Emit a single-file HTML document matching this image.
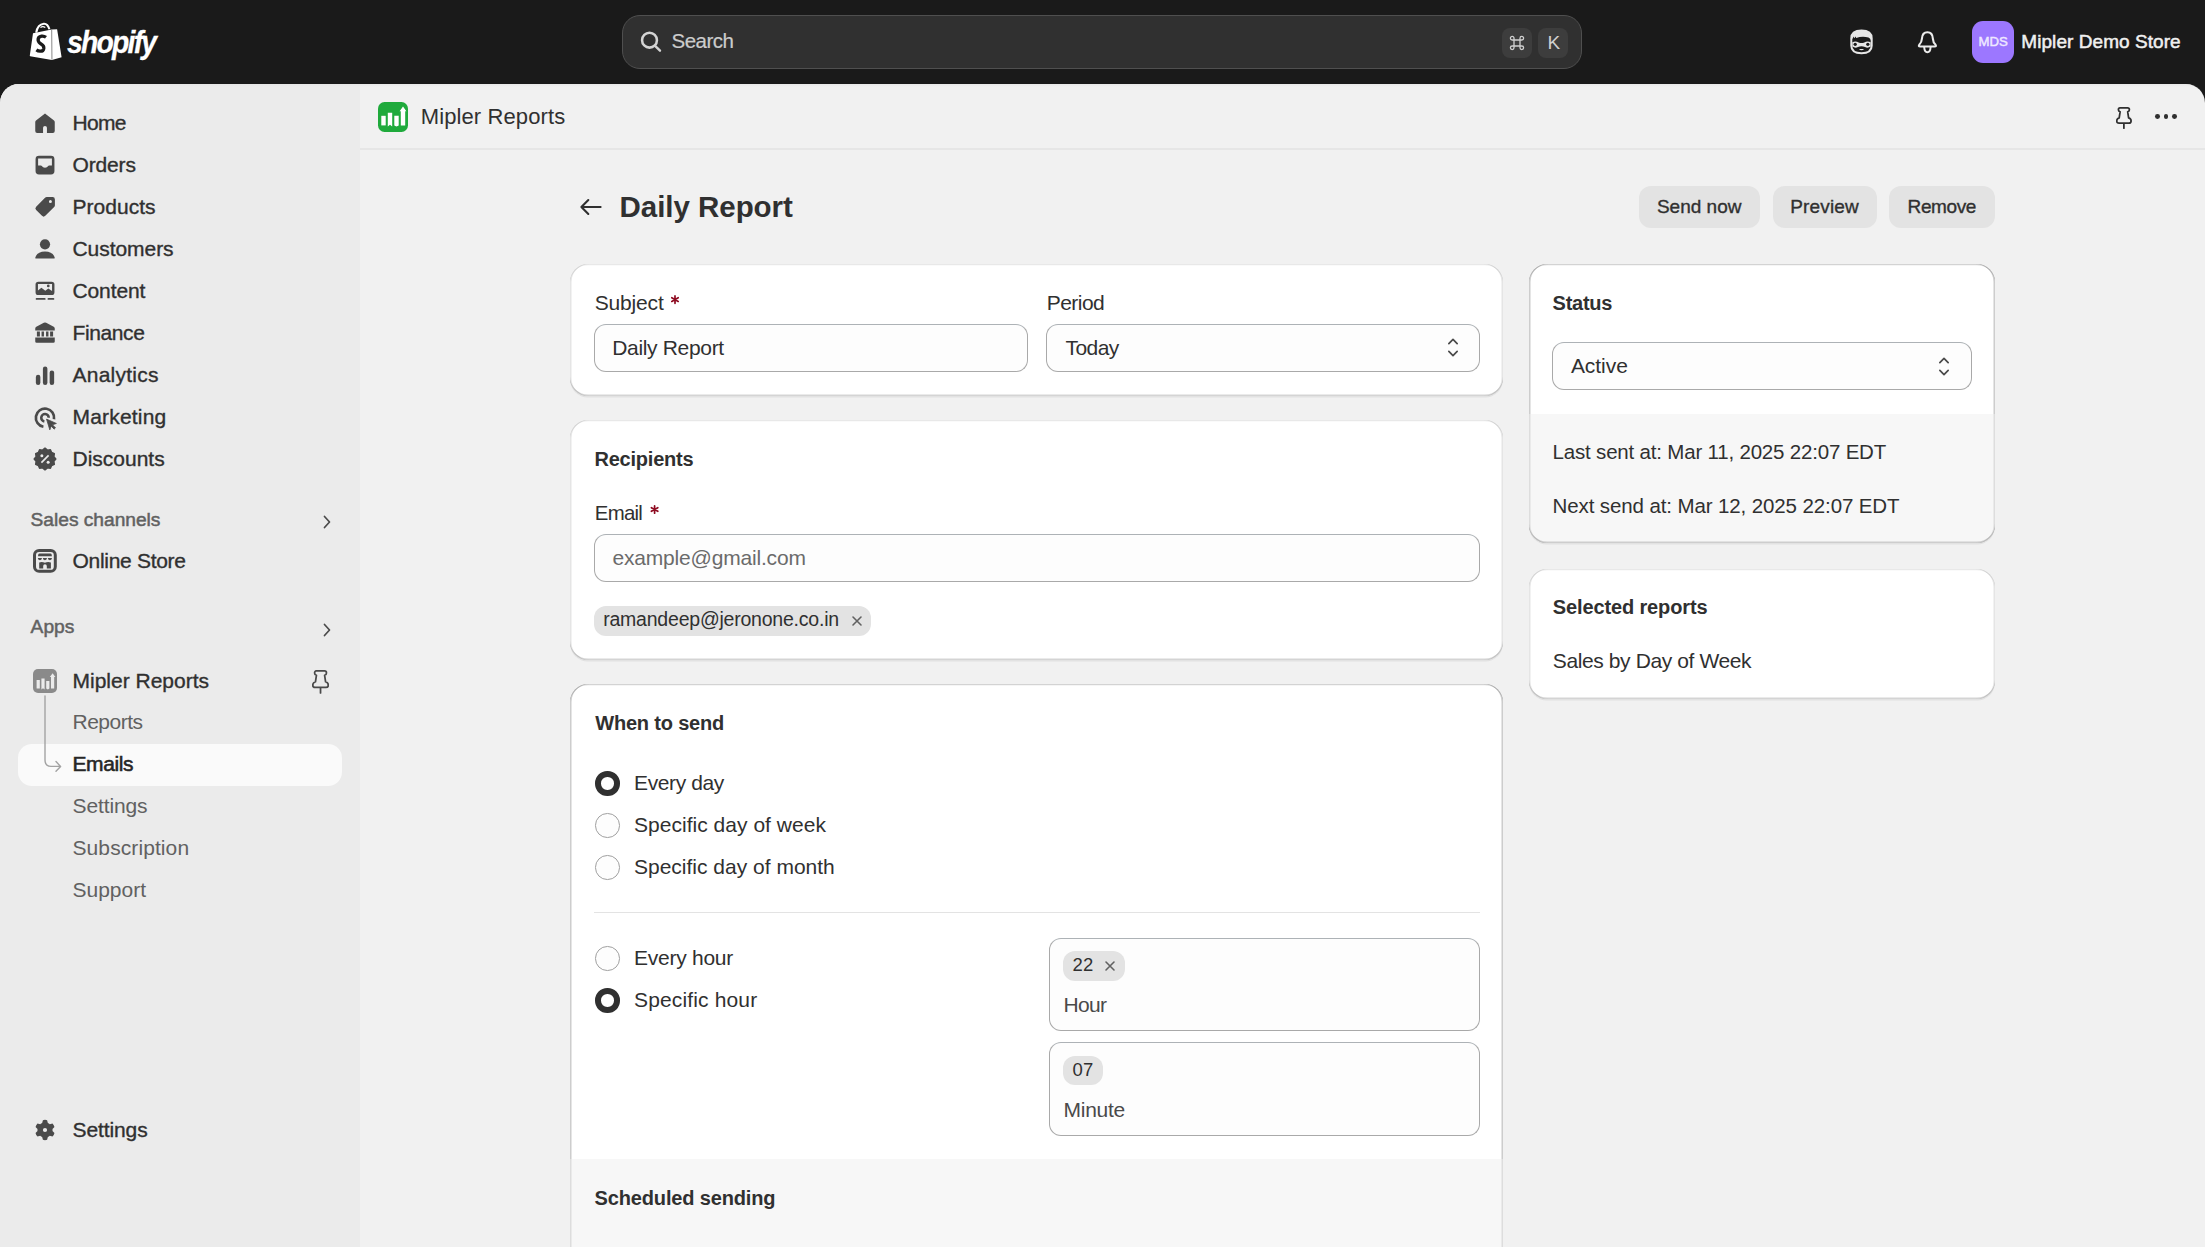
<!DOCTYPE html>
<html><head><meta charset="utf-8">
<style>
*{box-sizing:border-box;margin:0;padding:0}
html,body{width:2205px;height:1247px;overflow:hidden;background:#1a1a1a;font-family:"Liberation Sans",sans-serif;color:#303030;position:relative}
.abs{position:absolute}
.t{position:absolute;white-space:nowrap;line-height:1}
#frame{position:absolute;left:0;top:84px;width:2205px;height:1163px;border-radius:19px 19px 0 0;overflow:hidden;background:#f1f1f1}
#in{position:absolute;left:0;top:-84px;width:2205px;height:1247px}
.card{position:absolute;background:#fff;border-radius:18px;overflow:hidden;box-shadow:0 1.5px 0 0 rgba(26,26,26,.07),inset 0 1.2px 0 0 rgba(0,0,0,.09),inset 0 -1.5px 0 0 rgba(0,0,0,.17),inset 1.5px 0 0 0 rgba(0,0,0,.10),inset -1.5px 0 0 0 rgba(0,0,0,.10)}
.cardb{position:absolute;border-radius:18px;pointer-events:none;box-shadow:inset 0 1.2px 0 0 rgba(0,0,0,.09),inset 0 -1.5px 0 0 rgba(0,0,0,.17),inset 1.5px 0 0 0 rgba(0,0,0,.10),inset -1.5px 0 0 0 rgba(0,0,0,.10)}
.inp{position:absolute;border:1.6px solid #a9a9a9;border-top-color:#adb2b6;border-radius:12px;background:#fdfdfd}
</style></head><body>
<svg class="abs" style="left:0px;top:0px;" width="80" height="70" viewBox="0 0 80 70"><path d="M33 33.2 L51.6 29.4 L57.1 29.2 L61.6 57.3 L51.9 59.9 L30.2 56.2 Q29.7 56.1 29.8 55.5Z" fill="#fff"/>
  <path d="M51.7 29.6 L51.95 59.6" stroke="#7a7a7a" stroke-width="0.9"/>
  <path d="M36.2 32.6 Q37.6 24.6 43.8 23.8 Q47.6 23.5 49.4 29.2" fill="none" stroke="#fff" stroke-width="2.1"/>
  <path d="M40.5 27.6 Q42.6 25.6 45.3 27.5" fill="none" stroke="#fff" stroke-width="1.3"/>
  <path d="M46 37.3 Q44 35.8 41.6 36.1 Q37.9 36.7 38.1 40.1 Q38.4 42.6 41.4 44.2 Q44.1 45.7 43.8 48.4 Q43.3 51.4 40.1 51.2 Q38.1 51 36.4 49.8" fill="none" stroke="#1a1a1a" stroke-width="3.3"/></svg>
<div class="t" style="font-size:32px;left:66.50px;top:25.80px;color:#fff;font-weight:bold;font-style:italic;letter-spacing:-2px;transform:scaleX(0.885);transform-origin:0 0;-webkit-text-stroke:0.3px #fff;">shopify</div>
<div class="abs" style="left:622px;top:15px;width:960px;height:54px;border-radius:18px;background:#303030;border:1.5px solid #4f4f4f;"></div>
<svg class="abs" style="left:636px;top:27px;" width="30" height="30" viewBox="0 0 20 20"><circle cx="9" cy="8.8" r="4.95" fill="none" stroke="#d4d4d4" stroke-width="1.7"/><path d="M12.9 12.7 L16 15.8" stroke="#d4d4d4" stroke-width="1.6" stroke-linecap="round"/></svg>
<div class="t" style="font-size:20.5px;left:671.50px;top:31.35px;color:#cccccc;letter-spacing:-0.500px;-webkit-text-stroke:0.2px #cccccc;">Search</div>
<div class="abs" style="left:1501.5px;top:27.7px;width:30px;height:30px;border-radius:8px;background:#3d3d3d;"></div>
<div class="abs" style="left:1537.5px;top:27.7px;width:30px;height:30px;border-radius:8px;background:#3d3d3d;"></div>
<svg class="abs" style="left:1508.5px;top:34.5px;" width="16" height="16" viewBox="0 0 16 16"><path d="M5 5 H11 V11 H5Z M5 5 V3.2 A1.8 1.8 0 1 0 3.2 5 H5 M11 5 H12.8 A1.8 1.8 0 1 0 11 3.2 V5 M11 11 V12.8 A1.8 1.8 0 1 0 12.8 11 H11 M5 11 H3.2 A1.8 1.8 0 1 0 5 12.8 V11" fill="none" stroke="#d0d0d0" stroke-width="1.3"/></svg>
<div class="t" style="font-size:19px;left:1547.40px;top:32.70px;color:#d0d0d0;">K</div>
<svg class="abs" style="left:0px;top:0px;" width="2205" height="84" viewBox="0 0 2205 84"><path d="M1850.3 38.5 Q1850.3 29.6 1861.5 29.6 Q1872.7 29.6 1872.7 38.5 V45.5 Q1872.7 54.2 1861.5 54.2 Q1850.3 54.2 1850.3 45.5Z" fill="#e6e6e6"/>
<path d="M1852.3 39.2 L1853.6 36.6 L1854.3 38.3 L1855.6 36.4 L1856.2 38 Q1862 35.6 1868.5 37.4 Q1870.7 38.2 1870.7 40.5 V45.5 Q1870.7 52.2 1861.5 52.2 Q1852.3 52.2 1852.3 45.5Z" fill="#1a1a1a"/>
<path d="M1852.3 42.2 Q1855.8 40.9 1858.6 42.5 Q1861.5 43.7 1864.4 42.5 Q1867.2 40.9 1870.7 42.2 V46.6 Q1867.8 48.6 1865 47.1 Q1861.5 45.4 1858 47.1 Q1855.2 48.6 1852.3 46.6Z" fill="#e6e6e6"/>
<circle cx="1855.2" cy="44.3" r="1.65" fill="#1a1a1a"/><circle cx="1867.8" cy="44.3" r="1.65" fill="#1a1a1a"/>
<path d="M1858.9 48.9 Q1861.5 51.6 1864.1 48.9Z" fill="#e6e6e6"/>
<path d="M1927.4 32.3 C1923.6 32.3 1922.1 35.3 1921.9 38.8 Q1921.6 42.6 1919.4 44.5 Q1918 46.5 1920.2 46.5 H1934.6 Q1936.8 46.5 1935.4 44.5 Q1933.2 42.6 1932.9 38.8 C1932.7 35.3 1931.2 32.3 1927.4 32.3Z" fill="none" stroke="#ececec" stroke-width="2.1" stroke-linejoin="round"/>
<path d="M1924.2 47 Q1924.5 52.3 1927.4 52.3 Q1930.3 52.3 1930.6 47" fill="none" stroke="#ececec" stroke-width="2"/></svg>
<div class="abs" style="left:1972.3px;top:20.8px;width:42.2px;height:42.2px;border-radius:11px;background:#9c77ff;"></div>
<div class="t" style="font-size:13.2px;left:1978.40px;top:35.10px;color:#efe8ff;-webkit-text-stroke:0.45px #efe8ff;">MDS</div>
<div class="t" style="font-size:19px;left:2021.30px;top:31.90px;color:#f0f0f0;letter-spacing:0.062px;-webkit-text-stroke:0.5px #f0f0f0;">Mipler Demo Store</div>
<div id="frame"><div id="in">
<div class="abs" style="left:0px;top:84px;width:360px;height:1163px;background:#ebebeb;"></div>
<div class="abs" style="left:0px;top:84px;width:2205px;height:3px;background:linear-gradient(#e2e2e2,rgba(255,255,255,0));opacity:.6;"></div>
<svg class="abs" style="left:30px;top:108px;" width="30" height="30" viewBox="0 0 20 20"><g fill="#4a4a4a"><path d="M10 3.6 L16 8.3 Q16.5 8.7 16.5 9.4 V15.3 Q16.5 16.6 15.2 16.6 H11.3 V13.2 Q11.3 12 10 12 Q8.7 12 8.7 13.2 V16.6 H4.8 Q3.5 16.6 3.5 15.3 V9.4 Q3.5 8.7 4 8.3 Z"/></g></svg>
<div class="t" style="font-size:21px;left:72.50px;top:112.00px;color:#303030;letter-spacing:-0.667px;-webkit-text-stroke:0.35px #303030;">Home</div>
<svg class="abs" style="left:30px;top:150px;" width="30" height="30" viewBox="0 0 20 20"><g fill="#4a4a4a"><path fill-rule="evenodd" d="M6 3.8 H14 Q16.3 3.8 16.3 6.1 V14 Q16.3 16.3 14 16.3 H6 Q3.7 16.3 3.7 14 V6.1 Q3.7 3.8 6 3.8Z M5.4 5.7 V10.3 H7.3 Q7.7 10.3 7.9 10.7 Q8.5 11.9 10 11.9 Q11.5 11.9 12.1 10.7 Q12.3 10.3 12.7 10.3 H14.6 V5.7Z"/></g></svg>
<div class="t" style="font-size:21px;left:72.50px;top:154.00px;color:#303030;letter-spacing:-0.160px;-webkit-text-stroke:0.35px #303030;">Orders</div>
<svg class="abs" style="left:30px;top:192px;" width="30" height="30" viewBox="0 0 20 20"><g fill="#4a4a4a"><path fill-rule="evenodd" d="M11.2 3.4 H15 Q16.6 3.4 16.6 5 V8.8 Q16.6 9.5 16.1 10 L10.2 15.9 Q9.1 17 8 15.9 L4.1 12 Q3 10.9 4.1 9.8 L10 3.9 Q10.5 3.4 11.2 3.4Z M13.6 5.4 A1 1 0 1 0 13.6 7.4 A1 1 0 1 0 13.6 5.4Z"/></g></svg>
<div class="t" style="font-size:21px;left:72.50px;top:196.00px;color:#303030;letter-spacing:0.029px;-webkit-text-stroke:0.35px #303030;">Products</div>
<svg class="abs" style="left:30px;top:234px;" width="30" height="30" viewBox="0 0 20 20"><g fill="#4a4a4a"><circle cx="10" cy="6.9" r="3.4"/><path d="M3.8 16.4 Q3.4 16.4 3.5 15.9 Q4.6 11.6 10 11.6 Q15.4 11.6 16.5 15.9 Q16.6 16.4 16.2 16.4Z"/></g></svg>
<div class="t" style="font-size:21px;left:72.50px;top:238.00px;color:#303030;letter-spacing:-0.050px;-webkit-text-stroke:0.35px #303030;">Customers</div>
<svg class="abs" style="left:30px;top:276px;" width="30" height="30" viewBox="0 0 20 20"><g fill="#4a4a4a"><path fill-rule="evenodd" d="M5.6 3.8 H14.4 Q16.3 3.8 16.3 5.7 V10.8 Q16.3 12.7 14.4 12.7 H5.6 Q3.7 12.7 3.7 10.8 V5.7 Q3.7 3.8 5.6 3.8Z M5.3 5.4 V9.6 L7.6 7.8 L10.2 9.8 L12.2 8.4 L14.7 10 V5.4Z"/><circle cx="12.2" cy="6.6" r="0.9"/><rect x="3.8" y="14.6" width="6.6" height="1.3" rx=".6"/><rect x="11.7" y="14.6" width="4.5" height="1.3" rx=".6"/></g></svg>
<div class="t" style="font-size:21px;left:72.50px;top:280.00px;color:#303030;letter-spacing:-0.117px;-webkit-text-stroke:0.35px #303030;">Content</div>
<svg class="abs" style="left:30px;top:318px;" width="30" height="30" viewBox="0 0 20 20"><g fill="#4a4a4a"><path fill-rule="evenodd" d="M9.2 3.2 Q10 2.8 10.8 3.2 L15.8 5.9 Q16.5 6.3 16.5 7 V8.3 H3.5 V7 Q3.5 6.3 4.2 5.9Z M3.5 13 H16.5 V15.6 Q16.5 16.5 15.6 16.5 H4.4 Q3.5 16.5 3.5 15.6Z M4.6 9 H6.6 V12.4 H4.6Z M7.7 9 H9.3 V12.4 H7.7Z M10.7 9 H12.3 V12.4 H10.7Z M13.4 9 H15.4 V12.4 H13.4Z"/></g></svg>
<div class="t" style="font-size:21px;left:72.50px;top:322.00px;color:#303030;letter-spacing:-0.383px;-webkit-text-stroke:0.35px #303030;">Finance</div>
<svg class="abs" style="left:30px;top:360px;" width="30" height="30" viewBox="0 0 20 20"><g fill="#4a4a4a"><rect x="3.9" y="9.9" width="3" height="6.7" rx="1.5"/><rect x="8.6" y="4.4" width="3" height="12.2" rx="1.5"/><rect x="13.1" y="7" width="3" height="9.6" rx="1.5"/></g></svg>
<div class="t" style="font-size:21px;left:72.50px;top:364.00px;color:#303030;letter-spacing:0.250px;-webkit-text-stroke:0.35px #303030;">Analytics</div>
<svg class="abs" style="left:30px;top:402px;" width="30" height="30" viewBox="0 0 20 20"><g fill="#4a4a4a"><path d="M8.94 16.51 A6.1 6.1 0 1 1 16.01 11.56" fill="none" stroke="#4a4a4a" stroke-width="1.8"/><path d="M9.57 12.96 A2.5 2.5 0 1 1 12.5 10.5" fill="none" stroke="#4a4a4a" stroke-width="1.7"/><path d="M11 11.4 L17.6 14.3 L15 15.2 L17 17.2 L16.1 18.1 L14.1 16.1 L13.2 18.6 Z" stroke="#4a4a4a" stroke-width=".5" stroke-linejoin="round"/></g></svg>
<div class="t" style="font-size:21px;left:72.50px;top:406.00px;color:#303030;letter-spacing:0.188px;-webkit-text-stroke:0.35px #303030;">Marketing</div>
<svg class="abs" style="left:30px;top:444px;" width="30" height="30" viewBox="0 0 20 20"><g fill="#4a4a4a"><path d="M10 2.8 L11.6 4.1 L13.6 3.8 L14.4 5.7 L16.2 6.5 L15.9 8.4 L17.2 10 L15.9 11.6 L16.2 13.5 L14.4 14.3 L13.6 16.2 L11.6 15.9 L10 17.2 L8.4 15.9 L6.4 16.2 L5.6 14.3 L3.8 13.5 L4.1 11.6 L2.8 10 L4.1 8.4 L3.8 6.5 L5.6 5.7 L6.4 3.8 L8.4 4.1Z" stroke="#4a4a4a" stroke-width="1" stroke-linejoin="round"/><circle cx="7.9" cy="7.9" r="1" fill="#ebebeb"/><circle cx="12.1" cy="12.1" r="1" fill="#ebebeb"/><path d="M7.2 12 L12 7.2 L12.8 8 L8 12.8Z" fill="#ebebeb"/></g></svg>
<div class="t" style="font-size:21px;left:72.50px;top:448.00px;color:#303030;-webkit-text-stroke:0.35px #303030;">Discounts</div>
<div class="t" style="font-size:19.2px;left:30.60px;top:509.60px;color:#616161;letter-spacing:-0.023px;-webkit-text-stroke:0.5px #616161;">Sales channels</div>
<svg class="abs" style="left:317px;top:512px;" width="20" height="20" viewBox="0 0 20 20"><path d="M7.5 4.5 L12.5 10 L7.5 15.5" fill="none" stroke="#4a4a4a" stroke-width="1.7" stroke-linecap="round" stroke-linejoin="round"/></svg>
<svg class="abs" style="left:0px;top:0px;" width="80" height="600" viewBox="0 0 80 600"><rect x="34.5" y="550.4" width="20.8" height="20.9" rx="4.6" fill="none" stroke="#4a4a4a" stroke-width="3"/><path d="M39.6 553.5 H50.3 Q51.3 553.5 51.6 554.6 L51.9 556.3 H38 L38.3 554.6 Q38.6 553.5 39.6 553.5Z" fill="#4a4a4a"/><path d="M37.8 558.1 A2.1 2.1 0 0 0 42 558.1Z M42.8 558.1 A2.1 2.1 0 0 0 47 558.1Z M47.8 558.1 A2.1 2.1 0 0 0 52 558.1Z" fill="#4a4a4a"/><path d="M39.2 562.4 Q42 561.2 44.9 562.8 Q47.8 561.2 50.9 562.4 V568.4 H46.8 V565.9 Q46.8 564.2 44.95 564.2 Q43.2 564.2 43.2 565.9 V568.4 H39.2Z" fill="#4a4a4a"/></svg>
<div class="t" style="font-size:21px;left:72.50px;top:549.80px;color:#303030;letter-spacing:-0.300px;-webkit-text-stroke:0.35px #303030;">Online Store</div>
<div class="t" style="font-size:19.2px;left:30.60px;top:617.00px;color:#616161;-webkit-text-stroke:0.5px #616161;">Apps</div>
<svg class="abs" style="left:317px;top:620px;" width="20" height="20" viewBox="0 0 20 20"><path d="M7.5 4.5 L12.5 10 L7.5 15.5" fill="none" stroke="#4a4a4a" stroke-width="1.7" stroke-linecap="round" stroke-linejoin="round"/></svg>
<svg class="abs" style="left:33px;top:668.7px;" width="24" height="24" viewBox="0 0 24 24"><rect width="24" height="24" rx="5" fill="#8a8a8a"/><rect x="3.6" y="11" width="3.2" height="8.5" fill="#ebebeb"/><path d="M8.4 9.5 H11.6 V20.5 L10 19.3 L8.4 20.5Z" fill="#ebebeb"/><path d="M13.2 12 H16.4 V19.5 L14.8 20.5 L13.2 19.5Z" fill="#ebebeb"/><path d="M18 19.5 V8 L16.8 8 L19.6 4.2 L22.4 8 L21.2 8 V19.5Z" fill="#ebebeb"/></svg>
<div class="t" style="font-size:21px;left:72.50px;top:669.60px;color:#303030;-webkit-text-stroke:0.35px #303030;">Mipler Reports</div>
<svg class="abs" style="left:311.5px;top:670px;" width="17.28" height="23.76" viewBox="0 0 16 22"><path d="M4 0.9 H11.6 Q13.4 0.9 13.4 2.7 Q13.4 4.3 11.7 4.9 L12.6 10.9 Q15.1 11.6 15.1 14 Q15.1 16.2 12.9 16.2 H2.9 Q0.7 16.2 0.7 14 Q0.7 11.6 3.2 10.9 L4.1 4.9 Q2.4 4.3 2.4 2.7 Q2.4 0.9 4 0.9Z M7.9 16.4 V21.2" fill="none" stroke="#4a4a4a" stroke-width="1.62" stroke-linecap="round" stroke-linejoin="round"/></svg>
<div class="abs" style="left:18px;top:744px;width:324px;height:42px;border-radius:14px;background:#fafafa;"></div>
<svg class="abs" style="left:38px;top:694px;" width="30" height="80" viewBox="0 0 30 80"><path d="M7 2 V66 Q7 72.4 13 72.4 H22.6 M18 67.6 L22.6 72.4 L18 77.2" fill="none" stroke="#a3a3a3" stroke-width="1.4" stroke-linecap="round" stroke-linejoin="round"/></svg>
<div class="t" style="font-size:21px;left:72.50px;top:711.40px;color:#616161;letter-spacing:-0.500px;">Reports</div>
<div class="t" style="font-size:21px;left:72.50px;top:794.90px;color:#616161;letter-spacing:-0.114px;">Settings</div>
<div class="t" style="font-size:21px;left:72.50px;top:837.10px;color:#616161;letter-spacing:0.091px;">Subscription</div>
<div class="t" style="font-size:21px;left:72.50px;top:879.10px;color:#616161;">Support</div>
<div class="t" style="font-size:21px;left:72.50px;top:752.90px;color:#262626;letter-spacing:-0.400px;-webkit-text-stroke:0.55px #262626;">Emails</div>
<svg class="abs" style="left:30px;top:1115px;" width="30" height="30" viewBox="0 0 20 20"><g fill="#4a4a4a"><path fill-rule="evenodd" d="M8.6 2.9 Q10 2.3 11.4 2.9 L11.9 4.7 Q12.6 5 13.2 5.5 L15 5 Q16 6 16.3 7.4 L15 8.7 Q15.1 9.4 15 10.1 L16.3 11.4 Q16 12.9 15 13.8 L13.2 13.3 Q12.6 13.8 11.9 14.1 L11.4 15.9 Q10 16.5 8.6 15.9 L8.1 14.1 Q7.4 13.8 6.8 13.3 L5 13.8 Q4 12.9 3.7 11.4 L5 10.1 Q4.9 9.4 5 8.7 L3.7 7.4 Q4 6 5 5 L6.8 5.5 Q7.4 5 8.1 4.7Z M10 8 A1.4 1.4 0 1 0 10 10.8 A1.4 1.4 0 1 0 10 8Z" transform="translate(0 0.6)"/></g></svg>
<div class="t" style="font-size:21px;left:72.60px;top:1118.60px;color:#303030;letter-spacing:-0.114px;-webkit-text-stroke:0.35px #303030;">Settings</div>
<div class="abs" style="left:360px;top:148px;width:1845px;height:1.5px;background:#e6e6e6;"></div>
<svg class="abs" style="left:378px;top:102px;" width="30" height="30" viewBox="0 0 30 30"><rect width="30" height="30" rx="6.5" fill="#1faa3c"/><rect x="3.3" y="13.8" width="4.4" height="9.6" fill="#fff"/><path d="M9.8 10.8 H14.2 V24.5 L12 22.8 L9.8 24.5Z" fill="#fff"/><path d="M16.3 13.8 H20.7 V23.4 L18.5 24.5 L16.3 23.4Z" fill="#fff"/><path d="M22.8 23.4 V9.2 L21.6 9.2 L25 4.6 L28.4 9.2 L27.2 9.2 V23.4Z" fill="#fff"/></svg>
<div class="t" style="font-size:22px;left:420.70px;top:106.20px;color:#303030;letter-spacing:0.115px;">Mipler Reports</div>
<svg class="abs" style="left:2116px;top:106.5px;" width="16.0" height="22.0" viewBox="0 0 16 22"><path d="M4 0.9 H11.6 Q13.4 0.9 13.4 2.7 Q13.4 4.3 11.7 4.9 L12.6 10.9 Q15.1 11.6 15.1 14 Q15.1 16.2 12.9 16.2 H2.9 Q0.7 16.2 0.7 14 Q0.7 11.6 3.2 10.9 L4.1 4.9 Q2.4 4.3 2.4 2.7 Q2.4 0.9 4 0.9Z M7.9 16.4 V21.2" fill="none" stroke="#303030" stroke-width="1.75" stroke-linecap="round" stroke-linejoin="round"/></svg>
<div class="abs" style="left:2155.2999999999997px;top:114.4px;width:4.8px;height:4.8px;border-radius:50%;background:#303030;"></div>
<div class="abs" style="left:2163.7px;top:114.4px;width:4.8px;height:4.8px;border-radius:50%;background:#303030;"></div>
<div class="abs" style="left:2172.1px;top:114.4px;width:4.8px;height:4.8px;border-radius:50%;background:#303030;"></div>
<svg class="abs" style="left:576px;top:192px;" width="30" height="30" viewBox="0 0 20 20"><path d="M16.4 10 H3.6 M8.2 5.4 L3.6 10 L8.2 14.6" fill="none" stroke="#303030" stroke-width="1.4" stroke-linecap="round" stroke-linejoin="round"/></svg>
<div class="t" style="font-size:29.5px;left:619.50px;top:192.25px;color:#303030;font-weight:bold;letter-spacing:-0.036px;">Daily Report</div>
<div class="abs" style="left:1638.8px;top:186px;width:121.29999999999995px;height:41.7px;border-radius:12px;background:#e3e3e3;"></div>
<div class="t" style="font-size:19px;left:1656.95px;top:196.80px;color:#303030;-webkit-text-stroke:0.35px #303030;">Send now</div>
<div class="abs" style="left:1772.5px;top:186px;width:104.5px;height:41.7px;border-radius:12px;background:#e3e3e3;"></div>
<div class="t" style="font-size:19px;left:1790.25px;top:196.80px;color:#303030;letter-spacing:0.167px;-webkit-text-stroke:0.35px #303030;">Preview</div>
<div class="abs" style="left:1889.4px;top:186px;width:105.39999999999986px;height:41.7px;border-radius:12px;background:#e3e3e3;"></div>
<div class="t" style="font-size:19px;left:1907.60px;top:196.80px;color:#303030;letter-spacing:-0.400px;-webkit-text-stroke:0.35px #303030;">Remove</div>
<div class="card" style="left:570px;top:264px;width:933px;height:131.5px"></div>
<div class="t" style="font-size:21px;left:594.80px;top:292.00px;color:#303030;letter-spacing:-0.183px;">Subject</div>
<svg class="abs" style="left:0;top:0" width="2205" height="1247" viewBox="0 0 2205 1247"><path d="M675.00 295.90 L675.00 303.30 M671.80 297.75 L678.20 301.45 M678.20 297.75 L671.80 301.45 " stroke="#8e0b21" stroke-width="1.7" stroke-linecap="round"/></svg>
<div class="t" style="font-size:21px;left:1046.70px;top:292.00px;color:#303030;letter-spacing:-0.520px;">Period</div>
<div class="abs" style="left:594px;top:324px;width:434px;height:48px;border:1.6px solid #a9a9a9;border-top-color:#adb2b6;border-radius:12px;background:#fdfdfd;"></div>
<div class="t" style="font-size:21px;left:612.20px;top:337.10px;color:#303030;letter-spacing:-0.327px;">Daily Report</div>
<div class="abs" style="left:1046px;top:324px;width:434px;height:48px;border:1.6px solid #a9a9a9;border-top-color:#adb2b6;border-radius:12px;background:#fdfdfd;"></div>
<div class="t" style="font-size:21px;left:1065.60px;top:337.10px;color:#303030;letter-spacing:-0.575px;">Today</div>
<svg class="abs" style="left:1439.5px;top:334.4px;" width="26" height="26" viewBox="0 0 20 20"><path d="M6.8 7.4 L10 4.2 L13.2 7.4 M6.8 13.4 L10 16.6 L13.2 13.4" fill="none" stroke="#4a4a4a" stroke-width="1.3" stroke-linecap="round" stroke-linejoin="round"/></svg>
<div class="card" style="left:570px;top:420px;width:933px;height:239.5px"></div>
<div class="t" style="font-size:20px;left:594.50px;top:448.50px;color:#303030;font-weight:bold;letter-spacing:-0.222px;">Recipients</div>
<div class="t" style="font-size:20.4px;left:594.80px;top:502.50px;color:#303030;letter-spacing:-0.750px;">Email</div>
<svg class="abs" style="left:0;top:0" width="2205" height="1247" viewBox="0 0 2205 1247"><path d="M654.60 505.80 L654.60 513.20 M651.40 507.65 L657.80 511.35 M657.80 507.65 L651.40 511.35 " stroke="#8e0b21" stroke-width="1.7" stroke-linecap="round"/></svg>
<div class="abs" style="left:594px;top:534px;width:886px;height:48px;border:1.6px solid #a9a9a9;border-top-color:#adb2b6;border-radius:12px;background:#fdfdfd;"></div>
<div class="t" style="font-size:21px;left:612.50px;top:547.00px;color:#6b6b6b;letter-spacing:-0.188px;">example@gmail.com</div>
<div class="abs" style="left:594px;top:606.3px;width:277px;height:29.4px;border-radius:12px;background:#e3e3e3;"></div>
<div class="t" style="font-size:19.5px;left:603.20px;top:610.25px;color:#303030;letter-spacing:-0.217px;">ramandeep@jeronone.co.in</div>
<svg class="abs" style="left:849px;top:613px;" width="16" height="16" viewBox="0 0 16 16"><path d="M4 4 L12 12 M12 4 L4 12" stroke="#616161" stroke-width="1.6" stroke-linecap="round"/></svg>
<div class="card" style="left:570px;top:684px;width:933px;height:600px"><div class="abs" style="left:0;top:475.4px;width:100%;height:200px;background:#f7f7f7"></div></div>
<div class="cardb" style="left:570px;top:684px;width:933px;height:600px"></div>
<div class="t" style="font-size:20px;left:595.20px;top:712.80px;color:#303030;font-weight:bold;letter-spacing:-0.182px;">When to send</div>
<div class="abs" style="left:595px;top:771px;width:24.5px;height:24.5px;border-radius:50%;border:6px solid #303030;background:#fff;"></div>
<div class="t" style="font-size:21px;left:634.00px;top:772.20px;color:#303030;letter-spacing:-0.375px;">Every day</div>
<div class="abs" style="left:595px;top:813px;width:24.5px;height:24.5px;border-radius:50%;border:1.3px solid #a0a0a0;background:#fdfdfd;"></div>
<div class="t" style="font-size:21px;left:634.00px;top:814.20px;color:#303030;letter-spacing:0.026px;">Specific day of week</div>
<div class="abs" style="left:595px;top:855px;width:24.5px;height:24.5px;border-radius:50%;border:1.3px solid #a0a0a0;background:#fdfdfd;"></div>
<div class="t" style="font-size:21px;left:634.00px;top:856.20px;color:#303030;">Specific day of month</div>
<div class="abs" style="left:594px;top:911.5px;width:886px;height:1.5px;background:#e3e3e3;"></div>
<div class="abs" style="left:595px;top:946px;width:24.5px;height:24.5px;border-radius:50%;border:1.3px solid #a0a0a0;background:#fdfdfd;"></div>
<div class="t" style="font-size:21px;left:634.00px;top:947.20px;color:#303030;letter-spacing:-0.256px;">Every hour</div>
<div class="abs" style="left:595px;top:988px;width:24.5px;height:24.5px;border-radius:50%;border:6px solid #303030;background:#fff;"></div>
<div class="t" style="font-size:21px;left:634.00px;top:989.20px;color:#303030;letter-spacing:0.150px;">Specific hour</div>
<div class="abs" style="left:1049px;top:937.5px;width:431px;height:93px;border:1.6px solid #a9a9a9;border-top-color:#adb2b6;border-radius:12px;background:#fdfdfd;"></div>
<div class="abs" style="left:1063px;top:951.1px;width:62px;height:29.5px;border-radius:12px;background:#e3e3e3;"></div>
<div class="t" style="font-size:18.5px;left:1072.60px;top:956.15px;color:#303030;">22</div>
<svg class="abs" style="left:1102px;top:958.3px;" width="16" height="16" viewBox="0 0 16 16"><path d="M4 4 L12 12 M12 4 L4 12" stroke="#616161" stroke-width="1.6" stroke-linecap="round"/></svg>
<div class="t" style="font-size:21px;left:1063.60px;top:993.70px;color:#4a4a4a;letter-spacing:-0.733px;">Hour</div>
<div class="abs" style="left:1049px;top:1042px;width:431px;height:93.5px;border:1.6px solid #a9a9a9;border-top-color:#adb2b6;border-radius:12px;background:#fdfdfd;"></div>
<div class="abs" style="left:1063px;top:1055.8px;width:40px;height:29.5px;border-radius:12px;background:#e3e3e3;"></div>
<div class="t" style="font-size:18.5px;left:1072.60px;top:1061.15px;color:#303030;">07</div>
<div class="t" style="font-size:21px;left:1063.60px;top:1098.70px;color:#4a4a4a;letter-spacing:-0.300px;">Minute</div>
<div class="t" style="font-size:20px;left:594.60px;top:1188.40px;color:#303030;font-weight:bold;letter-spacing:-0.150px;">Scheduled sending</div>
<div class="card" style="left:1528.5px;top:264px;width:466px;height:279px"><div class="abs" style="left:0;top:149.6px;width:100%;height:140px;background:#f7f7f7"></div></div>
<div class="cardb" style="left:1528.5px;top:264px;width:466px;height:279px"></div>
<div class="t" style="font-size:20px;left:1552.60px;top:292.80px;color:#303030;font-weight:bold;letter-spacing:-0.260px;">Status</div>
<div class="abs" style="left:1551.7px;top:342px;width:420px;height:48px;border:1.6px solid #a9a9a9;border-top-color:#adb2b6;border-radius:12px;background:#fdfdfd;"></div>
<div class="t" style="font-size:21px;left:1570.90px;top:354.90px;color:#303030;letter-spacing:-0.040px;">Active</div>
<svg class="abs" style="left:1930.8px;top:352.9px;" width="26" height="26" viewBox="0 0 20 20"><path d="M6.8 7.4 L10 4.2 L13.2 7.4 M6.8 13.4 L10 16.6 L13.2 13.4" fill="none" stroke="#4a4a4a" stroke-width="1.3" stroke-linecap="round" stroke-linejoin="round"/></svg>
<div class="t" style="font-size:20.5px;left:1552.60px;top:442.05px;color:#303030;letter-spacing:-0.191px;">Last sent at: Mar 11, 2025 22:07 EDT</div>
<div class="t" style="font-size:20.5px;left:1552.60px;top:495.55px;color:#303030;letter-spacing:-0.114px;">Next send at: Mar 12, 2025 22:07 EDT</div>
<div class="card" style="left:1528.5px;top:569px;width:466.0px;height:130px"></div>
<div class="t" style="font-size:20px;left:1552.80px;top:597.30px;color:#303030;font-weight:bold;letter-spacing:-0.133px;">Selected reports</div>
<div class="t" style="font-size:21px;left:1552.80px;top:649.90px;color:#303030;letter-spacing:-0.389px;">Sales by Day of Week</div>
</div></div>
</body></html>
